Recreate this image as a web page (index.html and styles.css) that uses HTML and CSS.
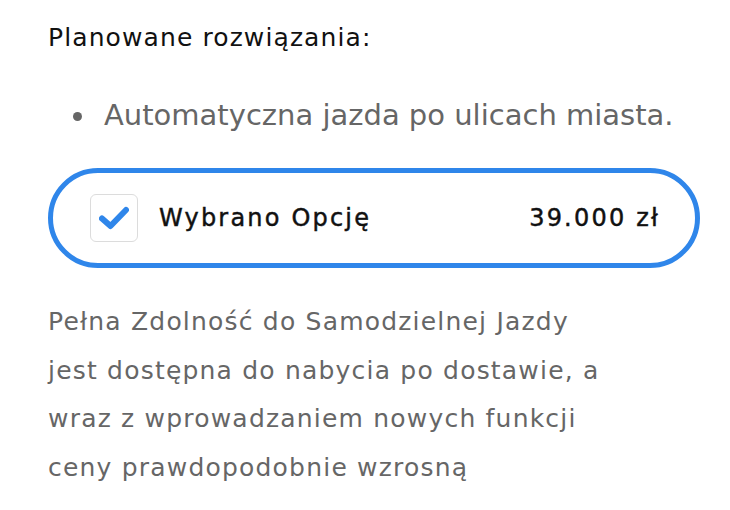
FILE: index.html
```html
<!DOCTYPE html>
<html lang="pl">
<head>
<meta charset="utf-8">
<link rel="stylesheet" href="styles.css">
</head>
<body>
<div class="page">
  <h2 class="title">Planowane rozwiązania:</h2>
  <ul class="features">
    <li>Automatyczna jazda po ulicach miasta.</li>
  </ul>
  <div class="option">
    <span class="check">
      <svg width="30" height="24" viewBox="0 0 30 24"><path d="M3 12.5 L11.5 20 L27 4" fill="none" stroke="#2f86ea" stroke-width="6" stroke-linecap="round" stroke-linejoin="round"/></svg>
    </span>
    <span class="label">Wybrano Opcję</span>
    <span class="price">39.000 zł</span>
  </div>
  <p class="note">Pełna Zdolność do Samodzielnej Jazdy<br>jest dostępna do nabycia po dostawie, a<br>wraz z wprowadzaniem nowych funkcji<br>ceny prawdopodobnie wzrosną</p>
</div>
</body>
</html>
```
FILE: styles.css
```css
html, body { margin: 0; padding: 0; background: #fff; }
.page {
  width: 730px;
  height: 510px;
  box-sizing: border-box;
  padding: 21px 20px 0 48px;
  font-family: "DejaVu Sans", sans-serif;
  overflow: hidden;
}
.title {
  margin: 0;
  font-weight: normal;
  font-size: 25px;
  letter-spacing: 1.1px;
  line-height: 34px;
  color: #111;
}
.features {
  margin: 42px 0 0 0;
  padding: 0 0 0 56px;
  list-style: none;
}
.features li {
  position: relative;
  font-size: 29px;
  line-height: 36px;
  color: #666;
}
.features li::before {
  content: "";
  position: absolute;
  left: -31px;
  top: 15px;
  width: 9px;
  height: 9px;
  border-radius: 50%;
  background: #666;
}
.option {
  margin-top: 35px;
  width: 652px;
  height: 100px;
  box-sizing: border-box;
  border: 5px solid #2f86ea;
  border-radius: 50px;
  display: flex;
  align-items: center;
  padding: 0 37px 0 37px;
  color: #111;
}
.check {
  width: 48px;
  height: 48px;
  box-sizing: border-box;
  border: 1.5px solid #dcdcdc;
  border-radius: 6px;
  display: flex;
  align-items: center;
  justify-content: center;
}
.label, .price {
  font-size: 24px;
  letter-spacing: 2.2px;
  -webkit-text-stroke: 0.45px #111;
}
.label {
  margin-left: 21px;
  flex: 1;
}
.price {
  margin-right: -2px;
}
.note {
  margin: 30px 0 0 0;
  font-size: 25px;
  letter-spacing: 1.2px;
  line-height: 48.5px;
  color: #666;
}
```
